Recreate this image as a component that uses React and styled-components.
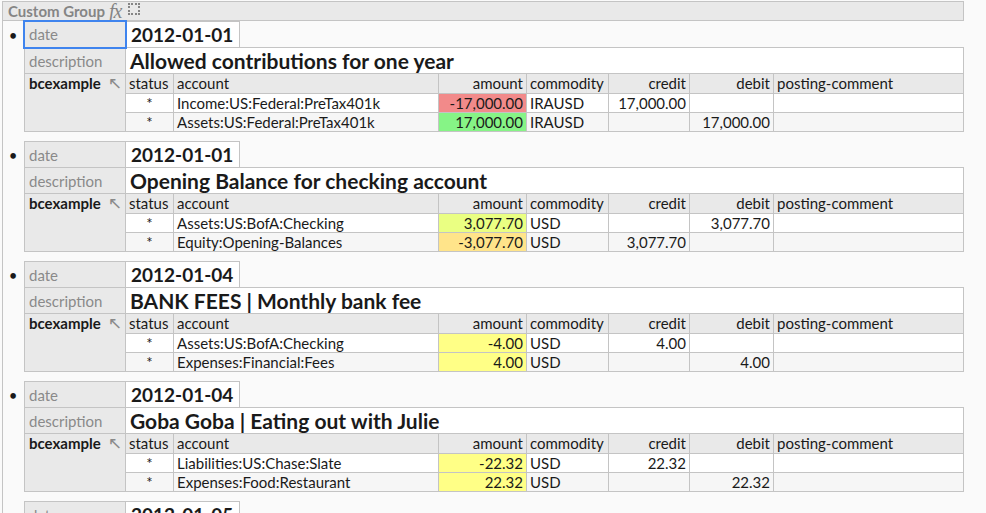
import React from 'react';
import styled, { createGlobalStyle } from 'styled-components';

const GlobalStyle = createGlobalStyle`
  html, body {
    margin: 0;
    padding: 0;
    background: #fafafa;
    font-family: Lato, "Noto Sans", sans-serif;
    color: #1a1a1a;
  }
`;

const BORDER = '#c4c4c4';
const LABEL_BG = '#e9e9e9';
const FOCUS = '#3f84ee';

// datos de ejemplo del libro contable
const records = [
  {
    date: '2012-01-01',
    description: 'Allowed contributions for one year',
    focused: true,
    postings: [
      { account: 'Income:US:Federal:PreTax401k', amount: '-17,000.00', color: '#f28a8a', commodity: 'IRAUSD', credit: '17,000.00', debit: '' },
      { account: 'Assets:US:Federal:PreTax401k', amount: '17,000.00', color: '#86f486', commodity: 'IRAUSD', credit: '', debit: '17,000.00' },
    ],
  },
  {
    date: '2012-01-01',
    description: 'Opening Balance for checking account',
    postings: [
      { account: 'Assets:US:BofA:Checking', amount: '3,077.70', color: '#eaff82', commodity: 'USD', credit: '', debit: '3,077.70' },
      { account: 'Equity:Opening-Balances', amount: '-3,077.70', color: '#ffe48a', commodity: 'USD', credit: '3,077.70', debit: '' },
    ],
  },
  {
    date: '2012-01-04',
    description: 'BANK FEES | Monthly bank fee',
    postings: [
      { account: 'Assets:US:BofA:Checking', amount: '-4.00', color: '#ffff86', commodity: 'USD', credit: '4.00', debit: '' },
      { account: 'Expenses:Financial:Fees', amount: '4.00', color: '#ffff86', commodity: 'USD', credit: '', debit: '4.00' },
    ],
  },
  {
    date: '2012-01-04',
    description: 'Goba Goba | Eating out with Julie',
    postings: [
      { account: 'Liabilities:US:Chase:Slate', amount: '-22.32', color: '#ffff86', commodity: 'USD', credit: '22.32', debit: '' },
      { account: 'Expenses:Food:Restaurant', amount: '22.32', color: '#ffff86', commodity: 'USD', credit: '', debit: '22.32' },
    ],
  },
  {
    date: '2012-01-05',
    description: 'Chichipotle | Eating out with Joe',
    postings: [
      { account: 'Liabilities:US:Chase:Slate', amount: '-7.52', color: '#ffff86', commodity: 'USD', credit: '7.52', debit: '' },
      { account: 'Expenses:Food:Restaurant', amount: '7.52', color: '#ffff86', commodity: 'USD', credit: '', debit: '7.52' },
    ],
  },
];

const Page = styled.div`
  padding-top: 1px;
  height: 512px;
  overflow: hidden;
`;

const Group = styled.div`
  margin-left: 2px;
  border-left: 1px solid ${BORDER};
  width: 961px;
`;

const GroupHeader = styled.div`
  display: flex;
  align-items: center;
  height: 18px;
  background: ${LABEL_BG};
  border-top: 1px solid ${BORDER};
  border-bottom: 1px solid ${BORDER};
  border-right: 1px solid ${BORDER};
  padding-left: 5px;
  font-size: 15px;
  font-weight: bold;
  color: #858585;
`;

const Fx = styled.span`
  font-family: "Liberation Serif", serif;
  font-style: italic;
  font-weight: normal;
  font-size: 20px;
  line-height: 18px;
  margin-left: 4px;
  color: #858585;
  letter-spacing: -1px;
`;

const DottedBox = styled.span`
  display: inline-block;
  width: 8px;
  height: 8px;
  border: 2px dotted #858585;
  margin-left: 7px;
  margin-top: -4px;
`;

const RecordRow = styled.div`
  display: flex;
  align-items: flex-start;
  margin-bottom: 9px;
`;

const Bullet = styled.div`
  width: 21px;
  height: 26px;
  line-height: 28px;
  font-size: 15px;
  text-align: center;
  box-sizing: border-box;
  padding-right: 1px;
`;

const RecordGrid = styled.div`
  flex: 1;
  display: grid;
  grid-template-columns: 102px 114px 1fr;
  grid-template-rows: 26px 26px auto;
`;

const Label = styled.div`
  box-sizing: border-box;
  background: ${LABEL_BG};
  border: 1px solid ${BORDER};
  border-bottom: ${(p) => (p.$last ? `1px solid ${BORDER}` : 'none')};
  padding: 0 4px;
  font-size: 15px;
  font-weight: ${(p) => (p.$owner ? 'bold' : 'normal')};
  color: ${(p) => (p.$owner ? '#1a1a1a' : '#8a8a8a')};
  line-height: ${(p) => (p.$owner ? '19px' : '26px')};
  display: flex;
  justify-content: space-between;
  position: relative;
  ${(p) =>
    p.$focused &&
    `
    border-color: ${FOCUS};
    border-bottom: 1px solid ${FOCUS};
    line-height: 25px;
    height: 27px;
    box-shadow: 0 0 0 1px ${FOCUS};
    z-index: 2;
  `}
`;

const LinkArrow = styled.span`
  font-family: "DejaVu Sans", sans-serif;
  font-weight: normal;
  color: #8a8a8a;
  font-size: 17px;
  line-height: 19px;
  margin-right: -1px;
`;

const DateValue = styled.div`
  box-sizing: border-box;
  background: #fff;
  border-top: 1px solid ${BORDER};
  border-right: 1px solid ${BORDER};
  padding: 0 5px;
  font-size: 19px;
  font-weight: bold;
  line-height: 25px;
`;

const DescValue = styled.div`
  grid-column: 2 / 4;
  box-sizing: border-box;
  background: #fff;
  border-top: 1px solid ${BORDER};
  border-right: 1px solid ${BORDER};
  padding: 0 4px;
  font-size: 21px;
  font-weight: bold;
  line-height: 25px;
  white-space: nowrap;
  overflow: hidden;
`;

const Postings = styled.div`
  grid-column: 2 / 4;
  border-top: 1px solid ${BORDER};
  border-right: 1px solid ${BORDER};
  border-bottom: 1px solid ${BORDER};
`;

const PostingRow = styled.div`
  display: grid;
  grid-template-columns: 48px 265px 88px 82px 81px 84px 1fr;
  height: ${(p) => (p.$head ? '19px' : '18px')};
  background: ${(p) => (p.$head ? LABEL_BG : p.$odd ? '#f6f6f6' : '#fff')};
  & + & {
    border-top: 1px solid ${BORDER};
  }
`;

const Cell = styled.div`
  box-sizing: border-box;
  border-right: 1px solid ${BORDER};
  padding: 0 3px 0 3px;
  font-size: 15px;
  line-height: 18px;
  text-align: ${(p) => p.$align || 'left'};
  background: ${(p) => p.$bg || 'transparent'};
  white-space: nowrap;
  overflow: hidden;
  &:last-child {
    border-right: none;
  }
`;

function Record({ rec }) {
  return (
    <RecordRow>
      <Bullet>•</Bullet>
      <RecordGrid>
        <Label $focused={rec.focused}>date</Label>
        <DateValue>{rec.date}</DateValue>
        <div />
        <Label>description</Label>
        <DescValue>{rec.description}</DescValue>
        <Label $owner $last>
          bcexample <LinkArrow>↖</LinkArrow>
        </Label>
        <Postings>
          <PostingRow $head>
            <Cell>status</Cell>
            <Cell>account</Cell>
            <Cell $align="right">amount</Cell>
            <Cell>commodity</Cell>
            <Cell $align="right">credit</Cell>
            <Cell $align="right">debit</Cell>
            <Cell>posting-comment</Cell>
          </PostingRow>
          {rec.postings.map((p, i) => (
            <PostingRow key={i} $odd={i % 2 === 1}>
              <Cell $align="center">*</Cell>
              <Cell>{p.account}</Cell>
              <Cell $align="right" $bg={p.color}>{p.amount}</Cell>
              <Cell>{p.commodity}</Cell>
              <Cell $align="right">{p.credit}</Cell>
              <Cell $align="right">{p.debit}</Cell>
              <Cell />
            </PostingRow>
          ))}
        </Postings>
      </RecordGrid>
    </RecordRow>
  );
}

export default function App() {
  return (
    <>
      <GlobalStyle />
      <Page>
        <Group>
          <GroupHeader>
            Custom Group
            <Fx>fx</Fx>
            <DottedBox />
          </GroupHeader>
          {records.map((rec, i) => (
            <Record key={i} rec={rec} />
          ))}
        </Group>
      </Page>
    </>
  );
}
